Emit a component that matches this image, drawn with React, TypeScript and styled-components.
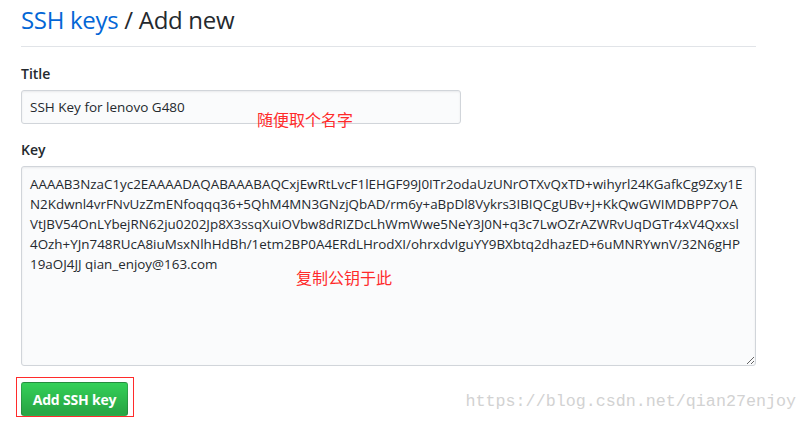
import React from "react";
import styled, { createGlobalStyle } from "styled-components";

const Global = createGlobalStyle`
  html, body { margin: 0; padding: 0; background: #fff; }
  body { font-family: "Open Sans", "Noto Sans", Arial, sans-serif; color: #24292e; }
`;

const Page = styled.div`
  position: relative;
  width: 806px;
  height: 421px;
  overflow: hidden;
  box-sizing: border-box;
  padding: 5px 50px 0 21px;
`;

const Heading = styled.h2`
  margin: 0;
  padding-bottom: 11px;
  border-bottom: 1px solid #e1e4e8;
  font-size: 24px;
  letter-spacing: -0.3px;
  line-height: 30px;
  font-weight: 400;
  color: #24292e;
  white-space: nowrap;
`;

const Crumb = styled.a`
  color: #0366d6;
  text-decoration: none;
`;

const Group = styled.div<{ $top: number }>`
  position: relative;
  margin-top: ${(p) => p.$top}px;
`;

const Label = styled.label`
  display: block;
  font-size: 14px;
  line-height: 20px;
  font-weight: 600;
  margin-bottom: 6px;
`;

const fieldBase = `
  box-sizing: border-box;
  display: block;
  background: #fafbfc;
  border: 1px solid #d1d5da;
  border-radius: 3px;
  box-shadow: inset 0 1px 2px rgba(27, 31, 35, 0.075);
  color: #24292e;
  font-family: "Open Sans", "Noto Sans", Arial, sans-serif;
  outline: none;
`;

const TextInput = styled.input`
  ${fieldBase}
  width: 440px;
  height: 34px;
  padding: 0 8px;
  font-size: 13.5px;
`;

const KeyArea = styled.textarea`
  ${fieldBase}
  width: 735px;
  height: 200px;
  padding: 7px 8px;
  font-size: 13.4px;
  line-height: 20px;
  white-space: pre;
  overflow: hidden;
  resize: vertical;
`;

const Note = styled.span<{ $left: number; $top: number }>`
  position: absolute;
  left: ${(p) => p.$left}px;
  top: ${(p) => p.$top}px;
  font-family: "Noto Sans CJK SC", sans-serif;
  font-size: 16px;
  line-height: 20px;
  color: #ff2a2a;
  white-space: nowrap;
  pointer-events: none;
`;

const Footer = styled.div`
  margin-top: 11px;
`;

const Highlight = styled.div`
  display: inline-block;
  margin-left: -5px;
  padding: 4px 5px 0 4px;
  border: 1px solid #ff2b2b;
`;

const Button = styled.button`
  display: block;
  box-sizing: border-box;
  width: 107px;
  height: 34px;
  padding: 0;
  border: 1px solid rgba(27, 31, 35, 0.2);
  border-radius: 3px;
  background: linear-gradient(-180deg, #34d058 0%, #28a745 90%);
  color: #fff;
  font-family: "Open Sans", "Noto Sans", Arial, sans-serif;
  font-size: 14px;
  font-weight: 700;
  letter-spacing: -0.2px;
  cursor: pointer;
`;

const Watermark = styled.div`
  position: absolute;
  right: 10px;
  bottom: 9px;
  font-family: "Liberation Mono", "DejaVu Sans Mono", monospace;
  font-size: 16.7px;
  line-height: 20px;
  color: #d2d2d2;
  white-space: nowrap;
`;

const keyText = [
  "AAAAB3NzaC1yc2EAAAADAQABAAABAQCxjEwRtLvcF1lEHGF99J0ITr2odaUzUNrOTXvQxTD+wihyrl24KGafkCg9Zxy1E",
  "N2Kdwnl4vrFNvUzZmENfoqqq36+5QhM4MN3GNzjQbAD/rm6y+aBpDl8Vykrs3IBIQCgUBv+J+KkQwGWIMDBPP7OA",
  "VtJBV54OnLYbejRN62ju0202Jp8X3ssqXuiOVbw8dRIZDcLhWmWwe5NeY3J0N+q3c7LwOZrAZWRvUqDGTr4xV4Qxxsl",
  "4Ozh+YJn748RUcA8iuMsxNlhHdBh/1etm2BP0A4ERdLHrodXI/ohrxdvIguYY9BXbtq2dhazED+6uMNRYwnV/32N6gHP",
  "19aOJ4JJ qian_enjoy@163.com",
].join("\n");

export default function App() {
  return (
    <>
      <Global />
      <Page>
        <Heading>
          <Crumb href="#">SSH keys</Crumb> / Add new
        </Heading>
        <Group $top={17}>
          <Label htmlFor="title">Title</Label>
          <TextInput id="title" defaultValue="SSH Key for lenovo G480" />
          <Note $left={236} $top={45}>随便取个名字</Note>
        </Group>
        <Group $top={16}>
          <Label htmlFor="key">Key</Label>
          <KeyArea id="key" defaultValue={keyText} spellCheck={false} />
          <Note $left={275} $top={127}>复制公钥于此</Note>
        </Group>
        <Footer>
          <Highlight>
            <Button type="button">Add SSH key</Button>
          </Highlight>
        </Footer>
        <Watermark>https://blog.csdn.net/qian27enjoy</Watermark>
      </Page>
    </>
  );
}
